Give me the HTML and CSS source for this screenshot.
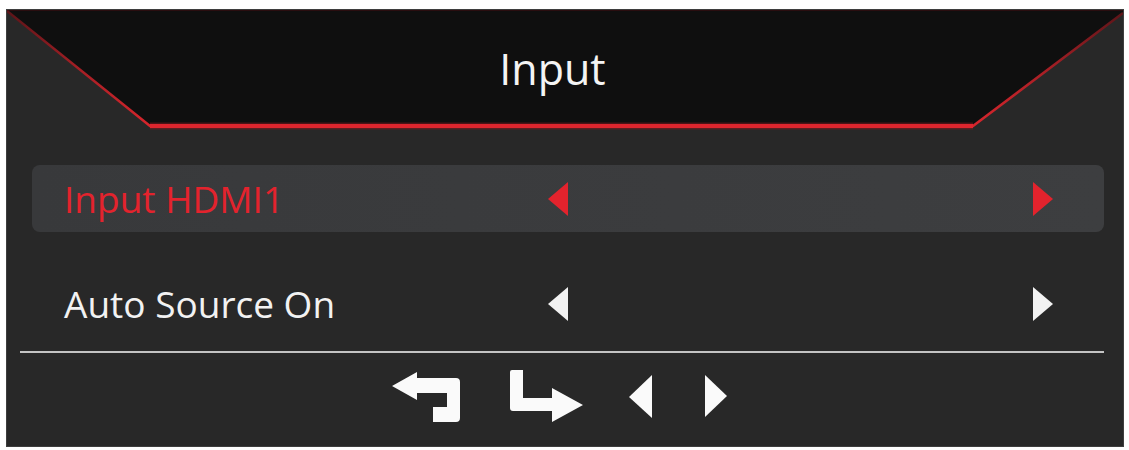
FILE: index.html
```html
<!DOCTYPE html>
<html lang="en">
<head>
  <meta charset="UTF-8">
  <title>Input</title>
  <link rel="stylesheet" href="styles.css">
</head>
<body>

  <div class="panel">

    <!-- Title bar with the red trim -->
    <div class="header">
      <svg class="header-shape" width="1116" height="122" viewBox="0 0 1116 122">
        <defs>
          <linearGradient id="trim" x1="0" y1="0" x2="0" y2="122" gradientUnits="userSpaceOnUse">
            <stop offset="0" stop-color="#5a1418"/>
            <stop offset="0.5" stop-color="#a81f25"/>
            <stop offset="1" stop-color="#dc262d"/>
          </linearGradient>
        </defs>
        <polygon points="0,0 1116,0 1116,3 966,116 143,116 0,2" fill="#0f0f0f"/>
        <line x1="0" y1="0.5" x2="1116" y2="0.5" stroke="#2a0d0f" stroke-width="1"/>
        <polyline points="0,1 143,116 966,116 1116,3" fill="none" stroke="url(#trim)" stroke-width="2.5"/>
        <line x1="143" y1="116" x2="966" y2="116" stroke="#8a1a1f" stroke-width="7" opacity="0.5"/>
        <line x1="143" y1="116" x2="966" y2="116" stroke="#df262e" stroke-width="4"/>
      </svg>
      <h1 class="title">Input</h1>
    </div>

    <div class="rows">
      <div class="row active">
        <span class="label">Input HDMI1</span>
        <svg class="arrow" width="20" height="34" viewBox="0 0 20 34"><path d="M0,17 L20,0 V34 Z"/></svg>
        <span></span>
        <svg class="arrow" width="20" height="34" viewBox="0 0 20 34"><path d="M0,0 L20,17 L0,34 Z"/></svg>
      </div>
      <div class="row">
        <span class="label">Auto Source On</span>
        <svg class="arrow" width="20" height="34" viewBox="0 0 20 34"><path d="M0,17 L20,0 V34 Z"/></svg>
        <span></span>
        <svg class="arrow" width="20" height="34" viewBox="0 0 20 34"><path d="M0,0 L20,17 L0,34 Z"/></svg>
      </div>
    </div>

    <div class="divider"></div>

    <!-- Key hints: back, enter, left, right -->
    <div class="keys">
      <svg class="key back" width="68" height="54" viewBox="0 0 68 54">
        <path d="M0,17 L25,3 V9 H64 Q68,9 68,13 V49 Q68,53 64,53 H41 V38 H55 V24 H25 V31 Z"/>
      </svg>
      <svg class="key enter" width="73" height="53" viewBox="0 0 73 53">
        <path d="M0,2 Q0,0 2,0 H13 V28 H42 V18 L73,35 L42,52 V41 H3 Q0,41 0,38 Z"/>
      </svg>
      <svg class="key prev" width="23" height="43" viewBox="0 0 23 43">
        <path d="M0,22 L23,0 V43 Z"/>
      </svg>
      <svg class="key next" width="22" height="42" viewBox="0 0 22 42">
        <path d="M0,0 L22,21 L0,42 Z"/>
      </svg>
    </div>

  </div>

</body>
</html>
```

FILE: styles.css
```css
body { margin: 0; background: #fff; font-family: "Open Sans", "Noto Sans", sans-serif; }

.panel { box-sizing: border-box; width: 1118px; height: 438px; margin: 9px 0 0 6px; background: #282828; border: 1px solid #3e3e3e; }

.header { display: grid; height: 122px; }
.header-shape, .title { grid-area: 1 / 1; }
.header-shape { display: block; }
.title { margin: 0; padding: 37px 25px 0 0; font-size: 43px; font-weight: 400; line-height: 1; color: #f4f4f4; text-align: center; }

.rows { margin: 33px 19px 0 25px; }
.row { display: grid; grid-template-columns: 484px 20px 1fr 20px; align-items: center; height: 67px; padding: 0 51px 0 32px; font-size: 37px; color: #f2f2f2; }
.row + .row { margin-top: 38px; }
.row.active { background: linear-gradient(90deg, #38393b, #3d3e40); border-radius: 8px; color: #e3232d; }
.label { line-height: 67px; white-space: nowrap; }
.arrow { display: block; fill: currentColor; }

.divider { height: 2px; margin: 14px 19px 0 13px; background: #c4c4c4; }

.keys { display: flex; align-items: center; height: 54px; margin-top: 16px; padding-left: 385px; }
.key { display: block; fill: #fafafa; }
.key.enter { margin-left: 50px; }
.key.prev { margin-left: 46px; }
.key.next { margin-left: 53px; }
```
